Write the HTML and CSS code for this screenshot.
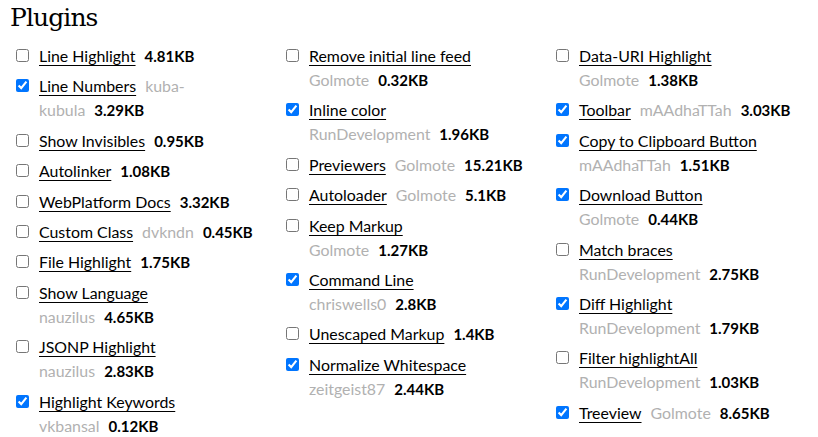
FILE: index.html
```html
<!DOCTYPE html>
<html lang="en">
<head>
<meta charset="utf-8">
<title>Plugins</title>
<link rel="stylesheet" href="styles.css">
</head>
<body>
<section class="section">
  <h1 class="title">Plugins</h1>
  <div class="columns">
    <ul class="column">
      <li class="plugin"><input type="checkbox"><div class="info"><a class="name" href="#">Line Highlight</a><span class="size">4.81KB</span></div></li>
      <li class="plugin"><input type="checkbox" checked><div class="info"><a class="name" href="#">Line Numbers</a><span class="author">kuba-<br>kubula</span><span class="size">3.29KB</span></div></li>
      <li class="plugin"><input type="checkbox"><div class="info"><a class="name" href="#">Show Invisibles</a><span class="size">0.95KB</span></div></li>
      <li class="plugin"><input type="checkbox"><div class="info"><a class="name" href="#">Autolinker</a><span class="size">1.08KB</span></div></li>
      <li class="plugin"><input type="checkbox"><div class="info"><a class="name" href="#">WebPlatform Docs</a><span class="size">3.32KB</span></div></li>
      <li class="plugin"><input type="checkbox"><div class="info"><a class="name" href="#">Custom Class</a><span class="author">dvkndn</span><span class="size">0.45KB</span></div></li>
      <li class="plugin"><input type="checkbox"><div class="info"><a class="name" href="#">File Highlight</a><span class="size">1.75KB</span></div></li>
      <li class="plugin"><input type="checkbox"><div class="info"><a class="name" href="#">Show Language</a><span class="meta"><span class="author">nauzilus</span><span class="size">4.65KB</span></span></div></li>
      <li class="plugin"><input type="checkbox"><div class="info"><a class="name" href="#">JSONP Highlight</a><span class="meta"><span class="author">nauzilus</span><span class="size">2.83KB</span></span></div></li>
      <li class="plugin"><input type="checkbox" checked><div class="info"><a class="name" href="#">Highlight Keywords</a><span class="meta"><span class="author">vkbansal</span><span class="size">0.12KB</span></span></div></li>
    </ul>
    <ul class="column">
      <li class="plugin"><input type="checkbox"><div class="info"><a class="name" href="#">Remove initial line feed</a><span class="meta"><span class="author">Golmote</span><span class="size">0.32KB</span></span></div></li>
      <li class="plugin"><input type="checkbox" checked><div class="info"><a class="name" href="#">Inline color</a><span class="meta"><span class="author">RunDevelopment</span><span class="size">1.96KB</span></span></div></li>
      <li class="plugin"><input type="checkbox"><div class="info"><a class="name" href="#">Previewers</a><span class="author">Golmote</span><span class="size">15.21KB</span></div></li>
      <li class="plugin"><input type="checkbox"><div class="info"><a class="name" href="#">Autoloader</a><span class="author">Golmote</span><span class="size">5.1KB</span></div></li>
      <li class="plugin"><input type="checkbox"><div class="info"><a class="name" href="#">Keep Markup</a><span class="meta"><span class="author">Golmote</span><span class="size">1.27KB</span></span></div></li>
      <li class="plugin"><input type="checkbox" checked><div class="info"><a class="name" href="#">Command Line</a><span class="meta"><span class="author">chriswells0</span><span class="size">2.8KB</span></span></div></li>
      <li class="plugin"><input type="checkbox"><div class="info"><a class="name" href="#">Unescaped Markup</a><span class="size">1.4KB</span></div></li>
      <li class="plugin"><input type="checkbox" checked><div class="info"><a class="name" href="#">Normalize Whitespace</a><span class="meta"><span class="author">zeitgeist87</span><span class="size">2.44KB</span></span></div></li>
    </ul>
    <ul class="column">
      <li class="plugin"><input type="checkbox"><div class="info"><a class="name" href="#">Data-URI Highlight</a><span class="meta"><span class="author">Golmote</span><span class="size">1.38KB</span></span></div></li>
      <li class="plugin"><input type="checkbox" checked><div class="info"><a class="name" href="#">Toolbar</a><span class="author">mAAdhaTTah</span><span class="size">3.03KB</span></div></li>
      <li class="plugin"><input type="checkbox" checked><div class="info"><a class="name" href="#">Copy to Clipboard Button</a><span class="meta"><span class="author">mAAdhaTTah</span><span class="size">1.51KB</span></span></div></li>
      <li class="plugin"><input type="checkbox" checked><div class="info"><a class="name" href="#">Download Button</a><span class="meta"><span class="author">Golmote</span><span class="size">0.44KB</span></span></div></li>
      <li class="plugin"><input type="checkbox"><div class="info"><a class="name" href="#">Match braces</a><span class="meta"><span class="author">RunDevelopment</span><span class="size">2.75KB</span></span></div></li>
      <li class="plugin"><input type="checkbox" checked><div class="info"><a class="name" href="#">Diff Highlight</a><span class="meta"><span class="author">RunDevelopment</span><span class="size">1.79KB</span></span></div></li>
      <li class="plugin"><input type="checkbox"><div class="info"><a class="name" href="#">Filter highlightAll</a><span class="meta"><span class="author">RunDevelopment</span><span class="size">1.03KB</span></span></div></li>
      <li class="plugin"><input type="checkbox" checked><div class="info"><a class="name" href="#">Treeview</a><span class="author">Golmote</span><span class="size">8.65KB</span></div></li>
    </ul>
  </div>
</section>
</body>
</html>
```

FILE: styles.css
```css
html, body {
  margin: 0;
  padding: 0;
  background: #fff;
}

body {
  font-family: "Lato", "Liberation Sans", sans-serif;
  font-size: 15px;
  color: #000;
}

.section {
  padding: 0 0 0 10px;
}

.title {
  margin: 0;
  font-family: "DejaVu Serif", "Liberation Serif", serif;
  font-weight: normal;
  font-size: 25px;
  letter-spacing: -0.9px;
  line-height: 36px;
  color: #000;
}

.columns {
  display: grid;
  grid-template-columns: 270px 270px 270px;
  margin-top: 8px;
  padding-left: 6px;
}

.column {
  list-style: none;
  margin: 0;
  padding: 0;
}

.plugin {
  display: grid;
  grid-template-columns: 13px 1fr;
  column-gap: 10px;
  line-height: 24px;
  margin-bottom: 6.4px;
}

.plugin input {
  margin: 5px 0 0 0;
  width: 13px;
  height: 13px;
}

.info {
  min-width: 0;
}

.name {
  color: #000;
  font-size: 15.9px;
  text-decoration: underline;
  text-underline-offset: 3px;
}

.author {
  color: #b1b1b1;
  font-size: 15.9px;
  margin-left: 9px;
}

.size {
  font-weight: bold;
  margin-left: 9px;
}

.meta {
  display: block;
}

.meta .author {
  margin-left: 0;
}
```
